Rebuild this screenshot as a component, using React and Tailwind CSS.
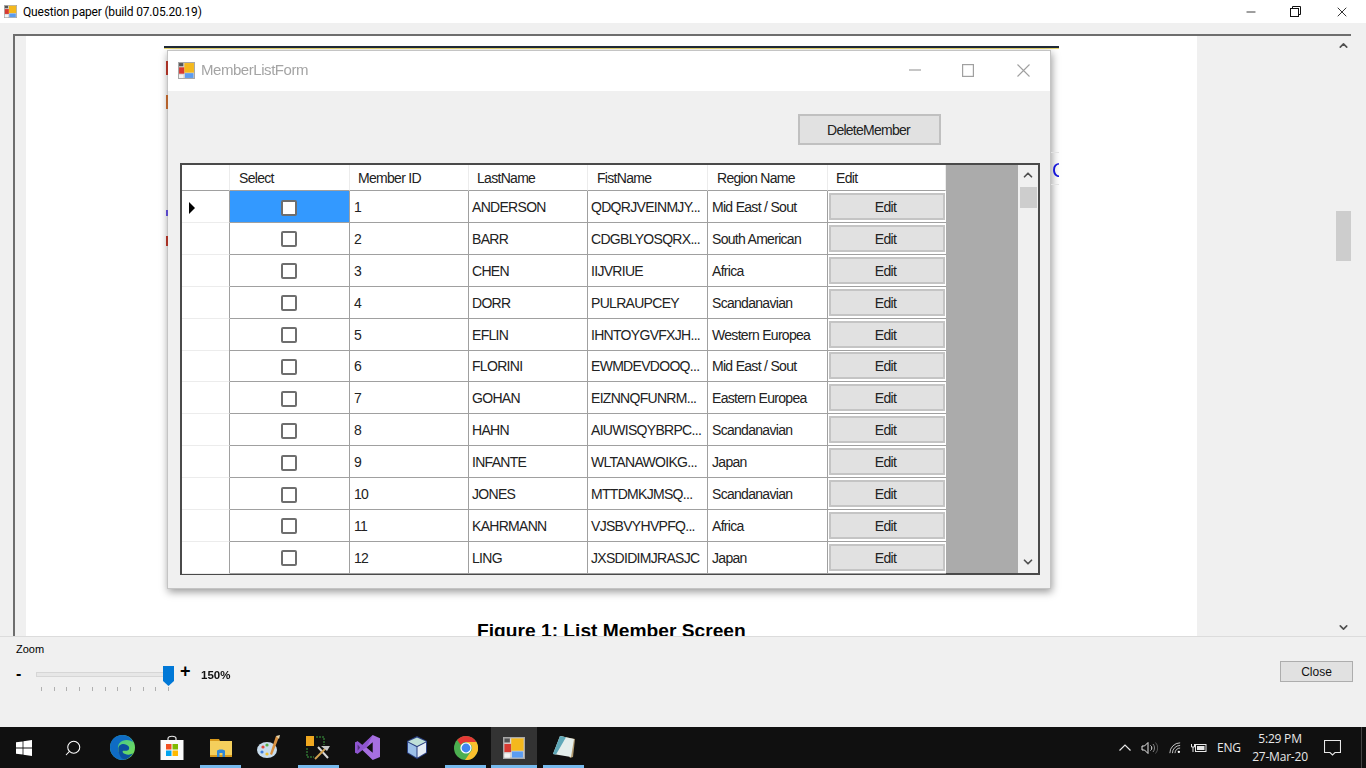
import { Minus, X, ChevronUp, ChevronDown, Search } from 'lucide-react';

const MEMBERS = [
  ['1', 'ANDERSON', 'QDQRJVEINMJY...', 'Mid East / Sout'],
  ['2', 'BARR', 'CDGBLYOSQRX...', 'South American'],
  ['3', 'CHEN', 'IIJVRIUE', 'Africa'],
  ['4', 'DORR', 'PULRAUPCEY', 'Scandanavian'],
  ['5', 'EFLIN', 'IHNTOYGVFXJH...', 'Western Europea'],
  ['6', 'FLORINI', 'EWMDEVDOOQ...', 'Mid East / Sout'],
  ['7', 'GOHAN', 'EIZNNQFUNRM...', 'Eastern Europea'],
  ['8', 'HAHN', 'AIUWISQYBRPC...', 'Scandanavian'],
  ['9', 'INFANTE', 'WLTANAWOIKG...', 'Japan'],
  ['10', 'JONES', 'MTTDMKJMSQ...', 'Scandanavian'],
  ['11', 'KAHRMANN', 'VJSBVYHVPFQ...', 'Africa'],
  ['12', 'LING', 'JXSDIDIMJRASJC', 'Japan'],
];

const TICKS = [41, 54, 66, 79, 92, 105, 117, 130, 143, 155, 168];
const COLS = 'grid grid-cols-[48px_120px_119px_119px_120px_120px_118px]';

function AppIcon({ size = 16 }) {
  return (
    <svg width={size} height={size} viewBox="0 0 16 16">
      <rect x="0.5" y="0.5" width="15" height="15" fill="#d8d8d8" stroke="#a8a8a8" />
      <rect x="1" y="5" width="5" height="6" fill="#d83a32" />
      <rect x="6" y="1" width="9" height="9" fill="#f4b81c" />
      <rect x="6.5" y="10.5" width="8" height="4.5" fill="#5c9cf0" />
      <rect x="1" y="1" width="4" height="3" fill="#555" />
      <rect x="1" y="12" width="4" height="3" fill="#f4f4f4" />
    </svg>
  );
}

function Checkbox() {
  return <div className="w-[16px] h-[16px] bg-white border-2 border-[#6e6e6e] rounded-[2px]" />;
}

function GridRow({ member, first }) {
  const [id, last, firstName, region] = member;
  const textCell = 'border-r border-b border-[#a0a0a0] flex items-center overflow-hidden whitespace-nowrap pt-[2px]';
  return (
    <div className={`${COLS} h-[31.9px] text-[14px] tracking-[-0.7px] text-[#222]`}>
      <div className="border-r border-b border-r-[#a0a0a0] border-b-[#ececec] flex items-center pl-[7px] pt-[2px]">
        {first && <div className="w-0 h-0 border-y-[6px] border-y-transparent border-l-[6px] border-l-black" />}
      </div>
      <div className={`border-r border-b border-[#a0a0a0] flex items-center justify-center pt-[2px] pr-[2px] ${first ? 'bg-[#3399ff]' : ''}`}>
        <Checkbox />
      </div>
      <div className={`${textCell} pl-[4px]`}>{id}</div>
      <div className={`${textCell} pl-[3px]`}>{last}</div>
      <div className={`${textCell} pl-[3px]`}>{firstName}</div>
      <div className={`${textCell} pl-[4px]`}>{region}</div>
      <div className="border-b border-[#a0a0a0] py-[2px] pl-[1px] pr-[1px]">
        <div className="h-full bg-[#e1e1e1] border-2 border-[#c4c4c4] flex items-center justify-center pr-[3px] pt-[2px]">Edit</div>
      </div>
    </div>
  );
}

function MemberGrid() {
  const heads = [
    ['', ''],
    ['Select', 'pl-[9px]'],
    ['Member ID', 'pl-[8px]'],
    ['LastName', 'pl-[8px]'],
    ['FistName', 'pl-[9px]'],
    ['Region Name', 'pl-[9px]'],
    ['Edit', 'pl-[8px]'],
  ];
  return (
    <div className="ml-[12px] mr-[10px] h-[412px] border-2 border-[#4a4a4a] flex bg-[#ababab]">
      <div className="w-[764px] bg-white">
        <div className={`${COLS} h-[26px] text-[14px] tracking-[-0.7px] text-[#222]`}>
          {heads.map(([label, pad], i) => (
            <div key={i} className={`${pad} pt-[2px] flex items-center border-r border-b border-r-[#ececec] border-b-[#a0a0a0]`}>
              {label}
            </div>
          ))}
        </div>
        {MEMBERS.map((m, i) => <GridRow key={m[0]} member={m} first={i === 0} />)}
      </div>
      <div className="flex-1" />
      <div className="w-[20px] bg-[#f0f0f0] flex flex-col items-center">
        <div className="h-[22px] flex items-center justify-center"><ChevronUp size={14} strokeWidth={3} className="text-[#505050] mt-[-2px]" /></div>
        <div className="w-[17px] h-[21px] bg-[#cdcdcd]" />
        <div className="flex-1" />
        <div className="h-[22px] flex items-center justify-center"><ChevronDown size={14} strokeWidth={3} className="text-[#505050]" /></div>
      </div>
    </div>
  );
}

function MemberListForm() {
  return (
    <div className="ml-[141px] w-[884px] h-[539px] bg-[#f0f0f0] border border-[#c4c4c4] shadow-[1px_3px_8px_rgba(0,0,0,0.4)] blur-[0.35px] font-['Liberation_Sans',sans-serif]">
      <div className="h-[40px] bg-white flex items-center pb-[2px]">
        <div className="ml-[10px]"><AppIcon size={17} /></div>
        <span className="ml-[6px] text-[15px] text-[#a4a4a4] tracking-[-0.45px]">MemberListForm</span>
        <div className="flex-1" />
        <svg className="mr-[41px]" width="12" height="2" viewBox="0 0 12 2"><path d="M0 1H12" stroke="#a0a0a0" strokeWidth="1.2" /></svg>
        <svg className="mr-[43px]" width="12" height="13" viewBox="0 0 12 13" fill="none"><rect x="0.6" y="0.6" width="10.8" height="11.8" stroke="#a0a0a0" strokeWidth="1.2" /></svg>
        <svg className="mr-[20px]" width="13" height="13" viewBox="0 0 13 13" fill="none" stroke="#a0a0a0" strokeWidth="1.1"><path d="M0.5 0.5L12.5 12.5M12.5 0.5L0.5 12.5" /></svg>
      </div>
      <div className="flex justify-end mt-[23px] mb-[18px] mr-[109px]">
        <button className="w-[143px] h-[31px] bg-[#e1e1e1] border-2 border-[#c0c0c0] pt-[2px] pr-[2px] text-[14px] tracking-[-0.75px] text-[#222]">
          DeleteMember
        </button>
      </div>
      <MemberGrid />
    </div>
  );
}

function DocumentPage() {
  return (
    <div className="relative w-[1171px] bg-white overflow-hidden">
      <div className="mt-[10px] ml-[138px] w-[895px] h-[3px] bg-[#1f2a38] border-b border-[#e8d870]" />
      <div className="h-[1px]" />
      <MemberListForm />
      <p className="mt-[31px] ml-[451px] font-['Liberation_Sans',sans-serif] font-bold text-[19.2px] leading-[22px] text-black whitespace-nowrap">
        Figure 1: List Member Screen
      </p>
      {/* bits of the page image showing round the pasted form */}
      <div className="absolute left-[140px] top-[25px] w-[2px] h-[14px] bg-[#a83226]" />
      <div className="absolute left-[140px] top-[59px] w-[2px] h-[14px] bg-[#b5622c]" />
      <div className="absolute left-[140px] top-[174px] w-[2px] h-[6px] bg-[#5a4ac8]" />
      <div className="absolute left-[140px] top-[200px] w-[2px] h-[10px] bg-[#a83226]" />
      <div className="absolute left-[1025px] top-[116px] w-[8px] h-px bg-[#e2e2e2]" />
      <div className="absolute left-[1025px] top-[148px] w-[8px] h-px bg-[#e2e2e2]" />
      <div className="absolute left-[1026px] top-[124px] font-['Liberation_Sans',sans-serif] text-[20px] leading-[20px] text-[#1414d8] w-[7px] overflow-hidden">C</div>
    </div>
  );
}

function OuterScrollbar() {
  return (
    <div className="w-[15px] bg-[#f0f0f0] flex flex-col items-center relative">
      <ChevronUp size={13} strokeWidth={3} className="text-[#505050] mt-[3px]" />
      <div className="w-full h-[50px] bg-[#cdcdcd] mt-[159px]" />
      <div className="flex-1" />
      <ChevronDown size={13} strokeWidth={3} className="text-[#505050] mb-[2px]" />
    </div>
  );
}

function ZoomBar() {
  return (
    <div className="h-[91px] bg-[#f0f0f0] border-t border-[#dcdcdc] flex justify-between font-['Liberation_Sans',sans-serif] text-black">
      <div className="relative w-[300px]">
        <div className="absolute left-[16px] top-[6px] text-[11px] leading-[13px]">Zoom</div>
        <div className="absolute left-[16px] top-[28px] text-[16px] leading-[18px] font-bold">-</div>
        <div className="absolute left-[36px] top-[35px] w-[130px] h-[5px] bg-[#e7e7e7] border border-[#d6d6d6]" />
        <svg className="absolute left-[163px] top-[29px]" width="11" height="20" viewBox="0 0 11 20">
          <path d="M0 0H11V15L5.5 20L0 15Z" fill="#0078d7" />
        </svg>
        <div className="absolute left-[180px] top-[24px] text-[18px] leading-[20px] font-bold">+</div>
        <div className="absolute left-[201px] top-[31px] text-[11.5px] leading-[14px] font-bold text-[#111]">150%</div>
        {TICKS.map((x) => (
          <div key={x} className="absolute top-[50px] w-px h-[4px] bg-[#b0b0b0]" style={{ left: x }} />
        ))}
      </div>
      <button className="mt-[24px] mr-[13px] w-[73px] h-[21px] bg-[#e1e1e1] border border-[#adadad] text-[12px] text-[#111]">
        Close
      </button>
    </div>
  );
}

function EdgeIcon() {
  return (
    <svg width="25" height="25" viewBox="0 0 24 24">
      <defs>
        <linearGradient id="edgeA" x1="0" y1="0" x2="1" y2="1">
          <stop offset="0" stopColor="#35c1a0" />
          <stop offset="1" stopColor="#7be04f" />
        </linearGradient>
      </defs>
      <circle cx="12" cy="12" r="12" fill="url(#edgeA)" />
      <path d="M0 12C0 5 5 0 12 0C17 0 21 3 22 7C19 4 12 4 9 8C6 12 8 19 14 23.8C6 25 0 19 0 12Z" fill="#0f6cc4" />
      <path d="M8 13C8 8 15 7 18 11C19 13 18 15 16 15H13C11.5 15 12 17 14 18C17 19.5 20 19 22 17.5C20 21 17 23 14 23.8C10 22.5 8 18 8 13Z" fill="#0b4f9e" />
    </svg>
  );
}

function StoreIcon() {
  return (
    <svg width="24" height="25" viewBox="0 0 24 25">
      <path d="M8 6V3.5C8 0.5 16 0.5 16 3.5V6" fill="none" stroke="#e8e8e8" strokeWidth="1.2" />
      <rect x="0.5" y="5" width="23" height="20" fill="#fafafa" />
      <rect x="6" y="9" width="5.5" height="5.5" fill="#f25022" />
      <rect x="12.5" y="9" width="5.5" height="5.5" fill="#7fba00" />
      <rect x="6" y="15.5" width="5.5" height="5.5" fill="#00a4ef" />
      <rect x="12.5" y="15.5" width="5.5" height="5.5" fill="#ffb900" />
    </svg>
  );
}

function ExplorerIcon() {
  return (
    <svg width="22" height="20" viewBox="0 0 22 20">
      <path d="M0 1H9L10 3H0Z" fill="#d99a1c" />
      <rect x="0" y="3" width="22" height="15" fill="#f4cf5c" />
      <rect x="0" y="17" width="22" height="2" fill="#d99a1c" />
      <path d="M7 19V13C7 11 15 11 15 13V19H12.5V15H9.5V19Z" fill="#2f88d8" />
    </svg>
  );
}

function PaintIcon() {
  return (
    <svg width="25" height="25" viewBox="0 0 25 25">
      <ellipse cx="10" cy="15" rx="10" ry="8" fill="#c8dcec" />
      <circle cx="6" cy="12" r="1.6" fill="#e0483c" />
      <circle cx="10" cy="10" r="1.6" fill="#5ab04a" />
      <circle cx="5" cy="17" r="1.6" fill="#3c7ad8" />
      <circle cx="10" cy="19" r="1.6" fill="#f0c030" />
      <path d="M22 2L15 20L13 19L19 1Z" fill="#d89040" />
      <path d="M19 1L23 0L22 4Z" fill="#e8d8b0" />
    </svg>
  );
}

function ToolsIcon() {
  return (
    <svg width="25" height="24" viewBox="0 0 25 24">
      <rect x="0" y="0" width="8" height="10" fill="#f0a820" />
      <path d="M10 1H18V9" fill="none" stroke="#3ca040" strokeWidth="1" strokeDasharray="2 1" />
      <path d="M1 12V21H8" fill="none" stroke="#3ca040" strokeWidth="1" strokeDasharray="2 1" />
      <path d="M12 11L22 22" stroke="#d8d8d8" strokeWidth="2" />
      <path d="M19 13L9 23" stroke="#d0a050" strokeWidth="2" />
      <path d="M15 10H24L21 15Z" fill="#c8c8c8" />
    </svg>
  );
}

function StudioIcon() {
  return (
    <svg width="25" height="25" viewBox="0 0 24 24">
      <path d="M17 0L24 3V21L17 24L7 14.5L2.5 18L0 16.8V7.2L2.5 6L7 9.5ZM17 7L11 12L17 17Z" fill="#a66fe0" fillRule="evenodd" />
      <path d="M2.5 9L5 12L2.5 15Z" fill="#101010" />
      <path d="M17 0L7 9.5L2.5 6L0 7.2V16.8L2.5 18L7 14.5L11 12Z" fill="#7f45c4" fillOpacity="0.6" />
    </svg>
  );
}

function CubeIcon() {
  return (
    <svg width="24" height="25" viewBox="0 0 24 25">
      <path d="M12 1L22 6V18L12 24L2 18V6Z" fill="#2a3f80" />
      <path d="M12 2.5L21 6.5L12 11L3 6.5Z" fill="#bfe0d8" />
      <path d="M3 7.5L11.5 12V22.5L3 17.5Z" fill="#9cc0e8" />
      <path d="M21 7.5L12.5 12V22.5L21 17.5Z" fill="#e4ecf4" />
    </svg>
  );
}

function ChromeIcon() {
  return (
    <svg width="24" height="24" viewBox="0 0 24 24">
      <circle cx="12" cy="12" r="12" fill="#4caf50" />
      <path d="M12 0A12 12 0 0 1 22.4 6H12A6 6 0 0 0 6.8 9L3.2 3.9A12 12 0 0 1 12 0Z" fill="#e53935" />
      <path d="M22.4 6A12 12 0 0 1 11 24L16.5 16A6 6 0 0 0 17.2 9L12 6Z" fill="#fbc02d" />
      <circle cx="12" cy="12" r="5.6" fill="#fff" />
      <circle cx="12" cy="12" r="4.4" fill="#3f86ef" />
    </svg>
  );
}

function NotepadIcon() {
  return (
    <svg width="24" height="25" viewBox="0 0 24 25">
      <path d="M8 1L23 4L21 22L18 23L8 1Z" fill="#b09a70" />
      <path d="M8 1L22 4L19 22L1 19Z" fill="#e4eeec" />
      <path d="M8 1L14 2.2L4 19.5L1 19Z" fill="#5fa8b8" />
    </svg>
  );
}

function WindowsLogo() {
  return (
    <svg width="16" height="16" viewBox="0 0 16 16" fill="#fff">
      <path d="M0 2.3L6.6 1.4V7.6H0ZM7.4 1.3L16 0V7.6H7.4ZM0 8.4H6.6V14.6L0 13.7ZM7.4 8.4H16V16L7.4 14.7Z" />
    </svg>
  );
}

function TaskbarSlot({ width, underline, children }) {
  return (
    <div className="relative flex items-center justify-center h-full" style={{ width }}>
      {children}
      {underline && <div className="absolute bottom-0 left-[4px] right-[4px] h-[3px] bg-[#76b9ed]" />}
    </div>
  );
}

function Taskbar() {
  return (
    <div className="h-[41px] bg-[#101010] flex items-center text-[#e8e8e8] font-['Open_Sans','Liberation_Sans',sans-serif] relative">
      <TaskbarSlot width={48}><WindowsLogo /></TaskbarSlot>
      <TaskbarSlot width={50}><Search size={18} strokeWidth={1.4} className="text-white -scale-x-100" /></TaskbarSlot>
      <TaskbarSlot width={49}><EdgeIcon /></TaskbarSlot>
      <TaskbarSlot width={49}><StoreIcon /></TaskbarSlot>
      <TaskbarSlot width={49} underline><ExplorerIcon /></TaskbarSlot>
      <TaskbarSlot width={49}><PaintIcon /></TaskbarSlot>
      <TaskbarSlot width={49} underline><ToolsIcon /></TaskbarSlot>
      <TaskbarSlot width={49}><StudioIcon /></TaskbarSlot>
      <TaskbarSlot width={49}><CubeIcon /></TaskbarSlot>
      <TaskbarSlot width={49} underline><ChromeIcon /></TaskbarSlot>
      {/* pinned app that is open and active */}
      <div className="relative ml-[1px] mr-[2px] w-[46px] h-full bg-[#333333] flex items-center justify-center">
        <AppIcon size={22} />
        <div className="absolute bottom-0 left-0 right-0 h-[3px] bg-[#76b9ed]" />
      </div>
      <TaskbarSlot width={49} underline><NotepadIcon /></TaskbarSlot>
      <div className="flex-1" />
      <svg className="mr-[10px]" width="12" height="7" viewBox="0 0 12 7" fill="none" stroke="#e8e8e8" strokeWidth="1.2"><path d="M0.5 6.5L6 1L11.5 6.5" /></svg>
      <svg className="mr-[11px]" width="17" height="14" viewBox="0 0 17 14" fill="none" stroke="#e8e8e8" strokeWidth="1"><path d="M1 5H3.5L7 1.5V12.5L3.5 9H1Z" /><path d="M9.5 4.5A3 3 0 0 1 9.5 9.5" /><path d="M12 3A6 6 0 0 1 12 11" stroke="#888" /><path d="M14.5 1.5A8 8 0 0 1 14.5 12.5" stroke="#555" /></svg>
      <svg className="mr-[10px]" width="12" height="12" viewBox="0 0 14 14" fill="none" stroke="#e0e0e0" strokeWidth="1"><path d="M1 13A12 12 0 0 1 13 1" /><path d="M4 13A9 9 0 0 1 13 4" /><path d="M7 13A6 6 0 0 1 13 7" /><circle cx="11.5" cy="11.5" r="1.4" fill="#fff" stroke="none" /></svg>
      <svg className="mr-[10px]" width="16" height="10" viewBox="0 0 16 10" fill="none" stroke="#e8e8e8" strokeWidth="1"><rect x="4.5" y="1.5" width="10.5" height="7" /><rect x="6" y="3" width="7.5" height="4" fill="#e8e8e8" stroke="none" /><path d="M0.5 1V4H3.5V1" /><path d="M2 4V9" /></svg>
      <span className="text-[12px] w-[24px] tracking-[-0.2px] mr-[9px] whitespace-nowrap">ENG</span>
      <div className="w-[60px] text-center text-[12px] leading-[18px] tracking-[-0.2px] whitespace-nowrap">
        <div>5:29 PM</div>
        <div>27-Mar-20</div>
      </div>
      <svg className="ml-[14px] mr-[25px]" width="17" height="16" viewBox="0 0 17 16" fill="none" stroke="#e8e8e8" strokeWidth="1.1"><path d="M0.5 0.5H16.5V12.5H11L8.5 15L6 12.5H0.5Z" /></svg>
      <div className="absolute right-[4px] top-0 bottom-0 w-px bg-[#444]" />
    </div>
  );
}

function App() {
  return (
    <div className="h-screen w-full overflow-hidden flex flex-col bg-[#f0f0f0] font-['Liberation_Sans',sans-serif]">
      {/* Title bar */}
      <header className="h-[23px] bg-white flex items-center shrink-0">
        <div className="ml-[4px]"><AppIcon size={13} /></div>
        <span className="ml-[6px] font-['Roboto',sans-serif] text-[12px] tracking-[-0.18px] text-black">Question paper (build 07.05.20.19)</span>
        <div className="flex-1" />
        <Minus size={14} strokeWidth={1.3} className="text-black mr-[32px]" />
        <svg className="mr-[33px]" width="11" height="11" viewBox="0 0 11 11" fill="none" stroke="#111" strokeWidth="1"><rect x="0.5" y="2.5" width="8" height="8" /><path d="M2.5 2.5V0.5H10.5V8.5H8.5" /></svg>
        <X size={16} strokeWidth={1.2} className="text-black mr-[16px]" />
      </header>

      {/* Viewer */}
      <div className="flex-1 pt-[11px] pl-[13px] pr-[15px] min-h-0">
        <div className="h-full flex border-t-2 border-l-2 border-[#6e6e6e]">
          <div className="w-[11px] shrink-0" />
          <DocumentPage />
          <div className="flex-1" />
          <OuterScrollbar />
        </div>
      </div>

      <ZoomBar />
      <Taskbar />
    </div>
  );
}

export default App;
